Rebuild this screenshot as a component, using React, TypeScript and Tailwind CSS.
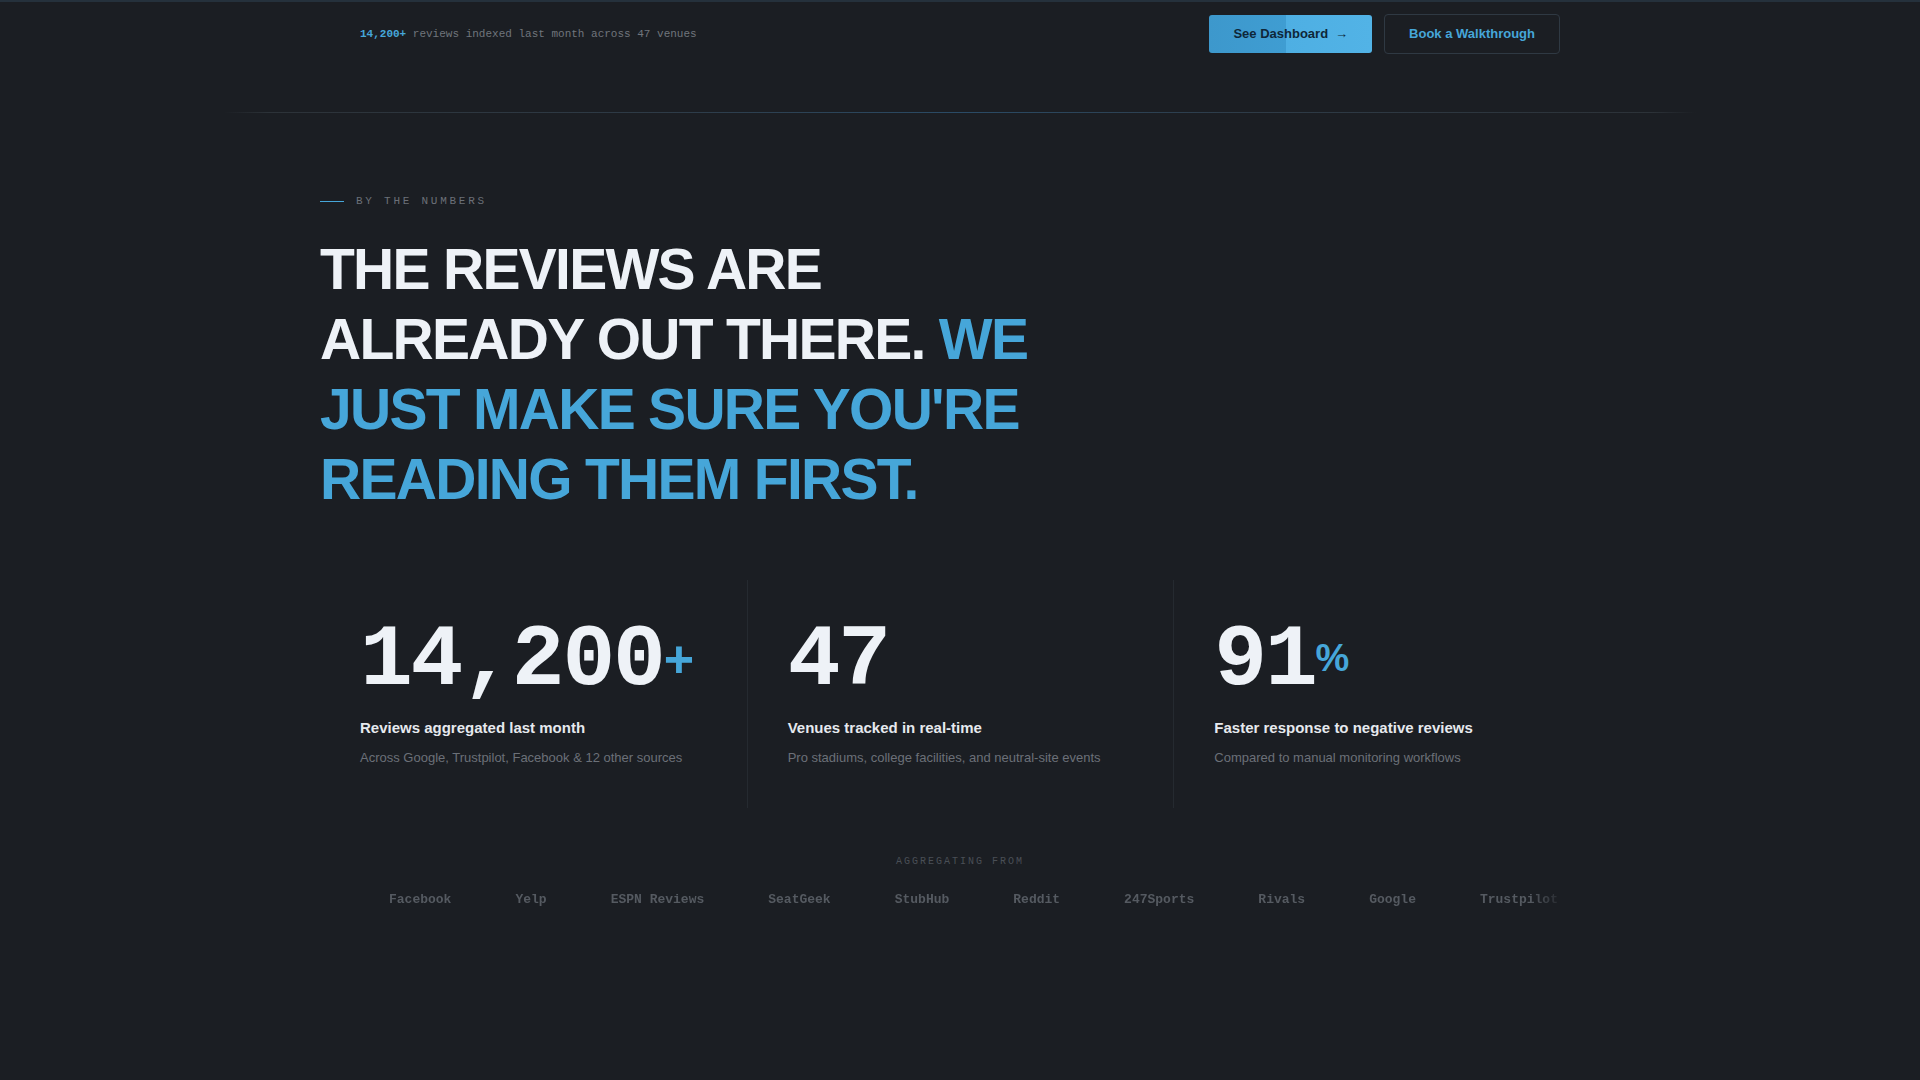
import { ReactNode } from 'react';

const mono = "font-['Liberation_Mono',monospace]";
const sans = "font-['Liberation_Sans',Arial,sans-serif]";

type Stat = {
  value: string;
  suffix?: string;
  suffixClass?: string;
  label: string;
  detail: string;
};

const stats: Stat[] = [
  {
    value: '14,200',
    suffix: '+',
    suffixClass: 'mt-[16px] text-[52px]',
    label: 'Reviews aggregated last month',
    detail: 'Across Google, Trustpilot, Facebook & 12 other sources',
  },
  { value: '47', label: 'Venues tracked in real-time', detail: 'Pro stadiums, college facilities, and neutral-site events' },
  {
    value: '91',
    suffix: '%',
    suffixClass: 'mt-[22px] text-[38px]',
    label: 'Faster response to negative reviews',
    detail: 'Compared to manual monitoring workflows',
  },
];

const sources = ['Facebook', 'Yelp', 'ESPN Reviews', 'SeatGeek', 'StubHub', 'Reddit', '247Sports', 'Rivals', 'Google', 'Trustpilot'];

function StatColumn({ stat, first }: { stat: Stat; first: boolean }) {
  return (
    <div className={`px-10 pt-[37px] pb-10 ${first ? '' : 'border-l border-[#252a30]'}`}>
      <div className="flex items-start">
        <span className={`${mono} text-[88px] leading-none font-bold tracking-[-0.025em] text-[#eef2f7]`}>{stat.value}</span>
        {stat.suffix && (
          <span className={`${sans} ${stat.suffixClass} leading-none font-semibold text-[#46a6d9]`}>{stat.suffix}</span>
        )}
      </div>
      <div className={`${sans} mt-[11px] text-[15px] leading-6 font-bold text-[#e6e9ee]`}>{stat.label}</div>
      <div className={`${sans} mt-2 text-[13px] leading-5 text-[#6b7078]`}>{stat.detail}</div>
    </div>
  );
}

function Blue({ children }: { children: ReactNode }) {
  return <span className="text-[#46a6d9]">{children}</span>;
}

export default function App() {
  return (
    <div className={`min-h-screen bg-[#1b1e23] border-t-2 border-[#25313c] ${sans}`}>
      <div className="max-w-7xl mx-auto">
        {/* top strip */}
        <div className="px-10 pt-[12px] flex items-center justify-between">
          <p className={`${mono} text-[11px] text-[#70757c]`}>
            <span className="font-bold text-[#46a6d9]">14,200+</span> reviews indexed last month across 47 venues
          </p>
          <div className="flex items-center gap-3">
            <button className="px-6 py-[10px] rounded-[3px] text-[13px] leading-[18px] font-bold text-[#0e2739] bg-[linear-gradient(90deg,#3d98cc_0%,#3f9dd2_47%,#4eafe3_47%,#52b3e6_100%)]">
              See Dashboard<span className="ml-[7px]">→</span>
            </button>
            <button className="px-6 py-[10px] rounded-[4px] border border-[#2f3943] text-[13px] leading-[18px] font-bold text-[#46a6d9]">
              Book a Walkthrough
            </button>
          </div>
        </div>
      </div>

      <div className="mx-56 mt-[58px] h-px bg-[linear-gradient(90deg,transparent_0%,#2c3238_3%,#2e3b47_30%,#2a4b66_50%,#2e3b47_70%,#2c3238_97%,transparent_100%)]" />

      <div className="max-w-7xl mx-auto">
        <section className="mt-[80px]">
          <div className="flex items-center gap-3">
            <span className="w-6 h-px bg-[#46a6d9]" />
            <span className={`${mono} text-[11px] leading-4 tracking-[0.25em] text-[#6b7078]`}>BY THE NUMBERS</span>
          </div>
          <h1 className="mt-[25px] text-[57px] leading-[70px] font-bold tracking-[-0.03em] text-[#eef2f7]">
            THE REVIEWS ARE
            <br />
            ALREADY OUT THERE. <Blue>WE</Blue>
            <br />
            <Blue>JUST MAKE SURE YOU'RE</Blue>
            <br />
            <Blue>READING THEM FIRST.</Blue>
          </h1>
        </section>

        <section className="mt-[66px] grid grid-cols-3">
          {stats.map((s, i) => (
            <StatColumn key={s.value} stat={s} first={i === 0} />
          ))}
        </section>

        <section className="mt-[46px] px-10">
          <div className={`${mono} text-center text-[10px] leading-4 tracking-[0.2em] text-[#4a4f56]`}>AGGREGATING FROM</div>
          <div className="mt-5 overflow-hidden [mask-image:linear-gradient(to_right,transparent_0,black_24px,black_calc(100%-30px),rgba(0,0,0,0.2)_100%)]">
            <div className="flex gap-16 pl-[29px] whitespace-nowrap">
              {sources.map((src) => (
                <span key={src} className={`${mono} text-[13px] leading-5 font-bold text-[#555a61]`}>
                  {src}
                </span>
              ))}
            </div>
          </div>
        </section>
      </div>
    </div>
  );
}
